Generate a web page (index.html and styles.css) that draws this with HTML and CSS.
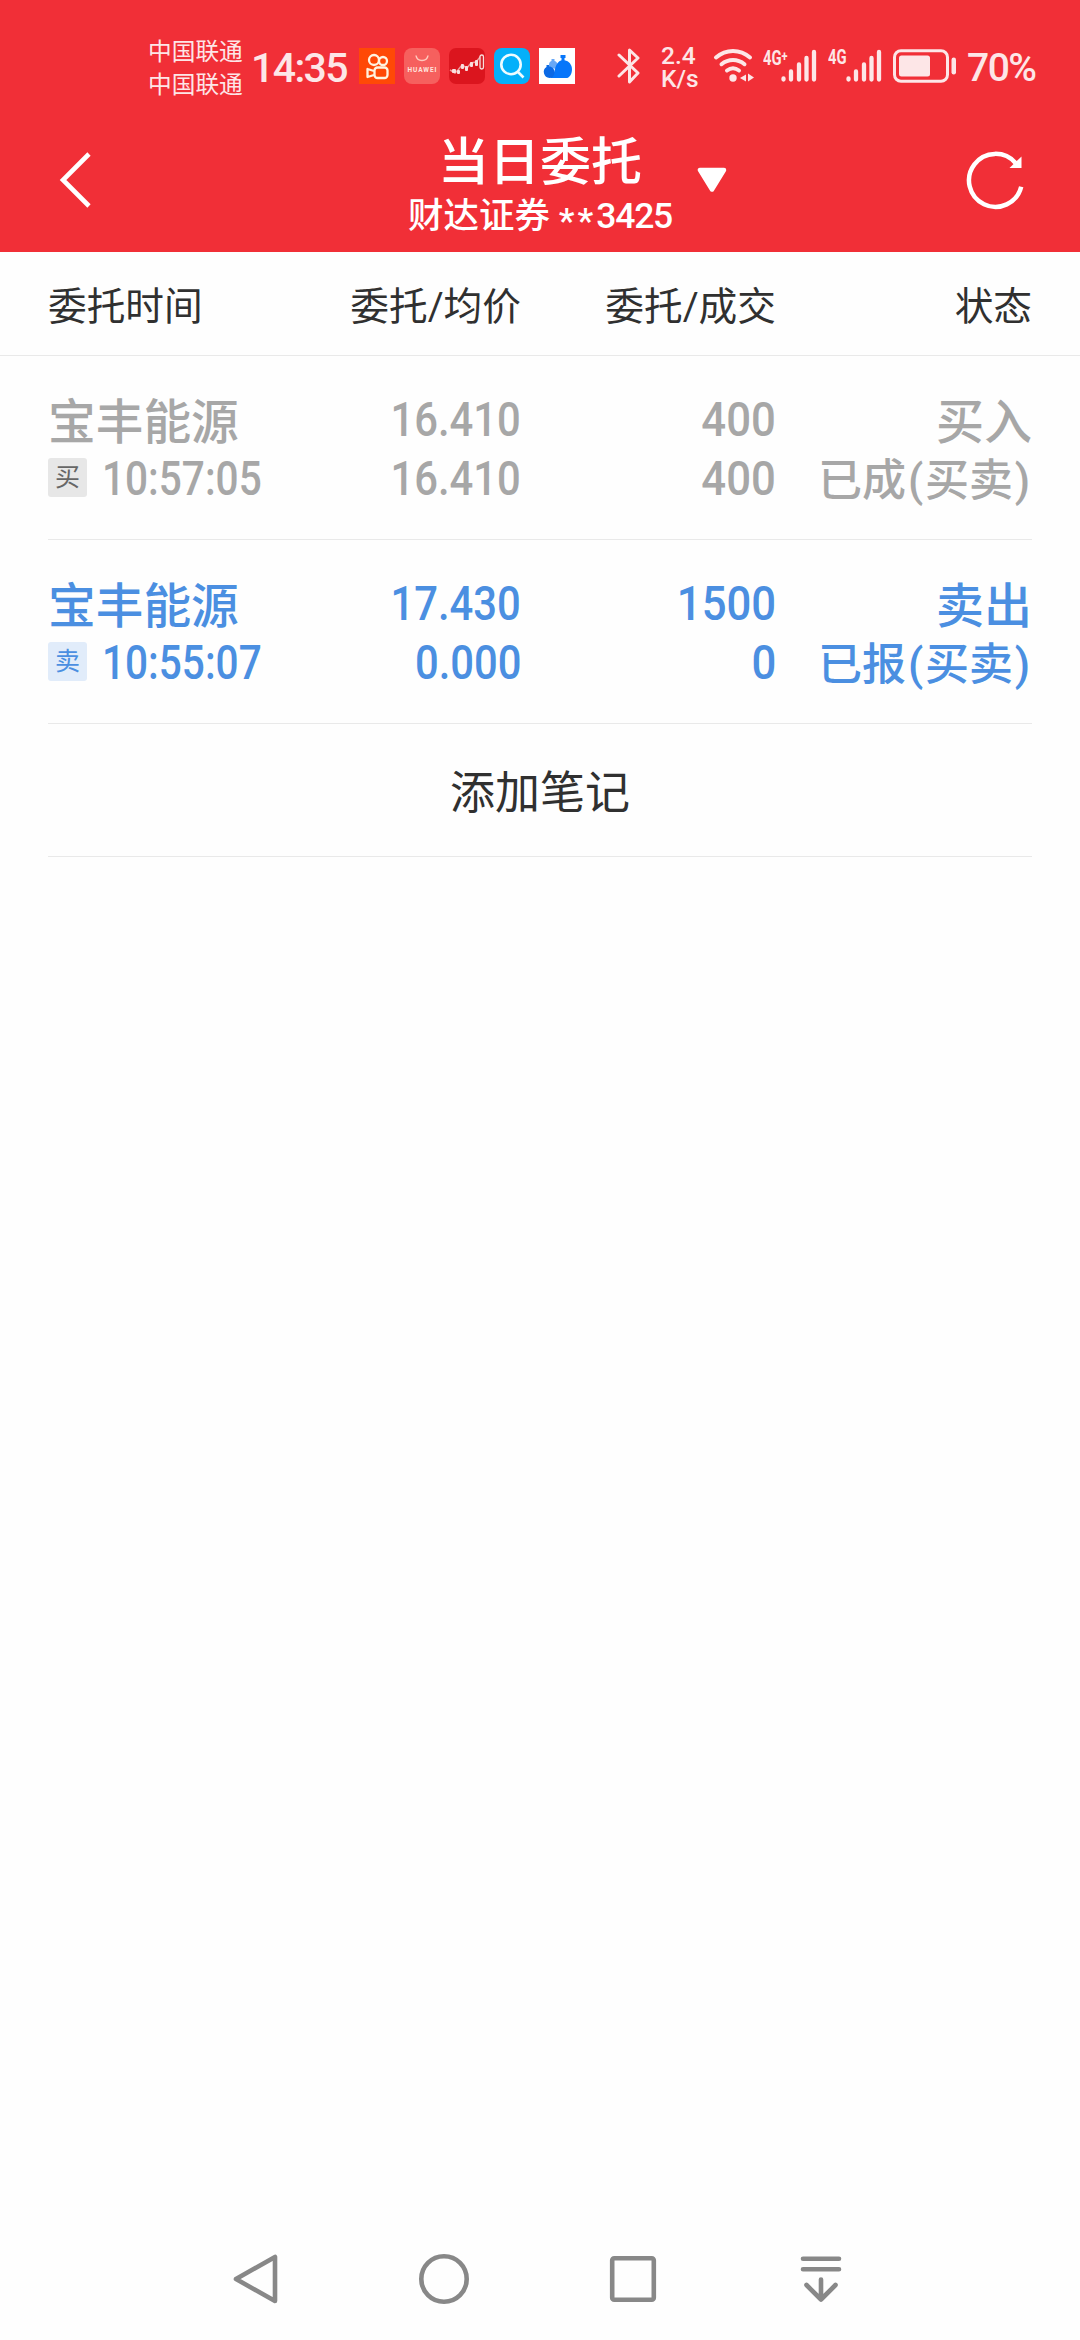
FILE: index.html
```html
<!DOCTYPE html>
<html lang="zh-CN">
<head>
<meta charset="utf-8">
<title>当日委托</title>
<link rel="stylesheet" href="styles.css">
</head>
<body>
<div class="screen">
  <header class="top">
    <div class="status">
      <div class="carriers"><span>中国联通</span><span>中国联通</span></div>
      <div class="clock">14:35</div>
      <div class="apps">
        <svg width="36" height="36" viewBox="0 0 36 36"><rect width="36" height="36" fill="#ff4906"/><g fill="none" stroke="#fff3df" stroke-width="2.3"><circle cx="15" cy="12" r="5"/><circle cx="24" cy="13" r="4"/><rect x="15.500" y="19.500" width="13" height="10.500" rx="3"/><path d="M15 23l-6.500-2v8l6.500-2" stroke-linejoin="round"/></g></svg>
        <svg width="36" height="36" viewBox="0 0 36 36"><rect width="36" height="36" rx="8" fill="#f6605e"/><path d="M12 7.500c1 6.500 11 6.500 12 0" fill="none" stroke="#ffc9bd" stroke-width="1.500"/><text x="18" y="23.500" text-anchor="middle" textLength="29" class="brand">HUAWEI</text></svg>
        <svg width="36" height="36" viewBox="0 0 36 36"><rect width="36" height="36" rx="7" fill="#db151e"/><path d="M1 22l5 3 3-3 4-5 5 3 4-5 5-1 5-6" fill="none" stroke="#ee9a9a" stroke-width="1.500"/><g fill="#f9dede"><rect x="3" y="21" width="4" height="4" rx="1"/><rect x="8" y="22" width="3" height="4" rx="1"/><rect x="12" y="16" width="3" height="5" rx="1"/><rect x="16" y="18" width="3" height="5" rx="1"/><rect x="21" y="14" width="3" height="5" rx="1"/><rect x="26" y="12" width="3" height="6" rx="1"/></g><rect x="31" y="7" width="3.500" height="14" rx="1.700" fill="#d5222a" stroke="#f9dede" stroke-width="1.300"/></svg>
        <svg width="36" height="36" viewBox="0 0 36 36"><rect width="36" height="36" rx="8" fill="#04b0fa"/><circle cx="17" cy="16.500" r="9.700" fill="none" stroke="#effcff" stroke-width="2.600"/><path d="M23.500 23.500l6 6" stroke="#effcff" stroke-width="2.600"/></svg>
        <svg width="36" height="36" viewBox="0 0 36 36"><rect width="36" height="36" fill="#fff"/><path d="M10 20v-3c0-2.500 1-3.500 2.500-4v-2h3v2c2 .5 3 2 3 4v4z" fill="#68a8f6"/><path d="M10 30c4-1 5-5 6-9 1-4.500 3.500-8 6.500-8.800V10h-1V7h5v3h-1v2.200c4.500.8 7.500 4.500 7.500 9 0 5-2.500 8.800-6 8.800z" fill="#0776fa"/><path d="M10.500 30a6 6 0 0 1-3-11v-2h2.500v1.600c3 0 5.500 2.500 5.500 5.400 0 3-2 6-5 6z" fill="#0b69e5"/></svg>
      </div>
      <svg class="bluetooth" width="24" height="40" viewBox="0 0 24 40" fill="none" stroke="#fde6e7" stroke-width="3" stroke-linecap="round" stroke-linejoin="round"><path d="M2 9l19 18-8.500 9V4L21 12 2 30"/></svg>
      <div class="speed"><span>2.4</span><span>K/s</span></div>
      <svg class="wifi" width="42" height="36" viewBox="0 0 42 36" fill="none" stroke="#fde6e7" stroke-width="4" stroke-linecap="round"><path d="M3 9.500C13 .8 27 .8 37 9.500M8.500 16.200c7-5.500 16-5.500 23 0M14 22.500c4-3 8-3 12 0"/><circle cx="20" cy="30" r="3.700" fill="#fde6e7" stroke="none"/><path d="M33 26.500v7l-6-3.500zM35 25.500v8l6-4z" fill="#fde6e7" stroke="none"/></svg>
      <div class="cell cell-plus"><span class="net"><span class="narrow">4G<small>+</small></span></span><svg width="36" height="34" viewBox="0 0 36 34" fill="none" stroke="#fde6e7" stroke-width="4.300" stroke-linecap="round"><path d="M2.500 29.500v1M10 22.500v8M18 15.500v15M25.500 9v21.500M33 3v27.500"/></svg></div>
      <div class="cell"><span class="net"><span class="narrow">4G</span></span><svg width="36" height="34" viewBox="0 0 36 34" fill="none" stroke="#fde6e7" stroke-width="4.300" stroke-linecap="round"><path d="M2.500 29.500v1M10 22.500v8M18 15.500v15M25.500 9v21.500M33 3v27.500"/></svg></div>
      <svg class="battery" width="64" height="34" viewBox="0 0 64 34"><rect x="1.500" y="1.700" width="53" height="30.600" rx="6.500" fill="none" stroke="#fde6e7" stroke-width="3"/><rect x="6" y="6.500" width="31" height="21" rx="2.500" fill="#fde6e7"/><rect x="58.500" y="8.500" width="4.500" height="17" rx="2.200" fill="#fde6e7"/></svg>
      <div class="percent">70%</div>
    </div>
    <nav class="titlebar">
      <svg class="back" width="34" height="60" viewBox="0 0 34 60" fill="none" stroke="#fff" stroke-width="4.600"><path d="M31 4L5 30l26 26"/></svg>
      <div class="heading">
        <h1>当日委托</h1>
        <p>财达证券 <span class="stars">**</span><span class="account">3425</span></p>
      </div>
      <svg class="caret" width="30" height="26" viewBox="0 0 30 26"><path d="M3 3h24L15 22.500z" fill="#fff" stroke="#fff" stroke-width="4.500" stroke-linejoin="round"/></svg>
      <svg class="refresh" width="64" height="64" viewBox="0 0 64 64"><path d="M57.200 38.800A26.500 26.500 0 1 1 51.500 15" fill="none" stroke="#fff" stroke-width="4.500"/><path d="M57.500 8.500V20H45.500z" fill="#fff"/></svg>
    </nav>
  </header>

  <main>
    <div class="grid table-head"><span>委托时间</span><span>委托/均价</span><span>委托/成交</span><span>状态</span></div>
    <section class="orders">
      <article class="grid order done">
        <div class="col"><div class="line name">宝丰能源</div><div class="line time"><i class="tag">买</i><span class="digits">10:57:05</span></div></div>
        <div class="col price"><div class="line"><span class="digits">16.410</span></div><div class="line"><span class="digits">16.410</span></div></div>
        <div class="col"><div class="line"><span class="digits">400</span></div><div class="line"><span class="digits">400</span></div></div>
        <div class="col state"><div class="line side">买入</div><div class="line">已成<b>(</b>买卖<b>)</b></div></div>
      </article>
      <article class="grid order sell">
        <div class="col"><div class="line name">宝丰能源</div><div class="line time"><i class="tag">卖</i><span class="digits">10:55:07</span></div></div>
        <div class="col price"><div class="line"><span class="digits">17.430</span></div><div class="line"><span class="digits">0.000</span></div></div>
        <div class="col"><div class="line"><span class="digits">1500</span></div><div class="line"><span class="digits">0</span></div></div>
        <div class="col state"><div class="line side">卖出</div><div class="line">已报<b>(</b>买卖<b>)</b></div></div>
      </article>
      <div class="note">添加笔记</div>
    </section>
  </main>

  <footer class="navbar">
    <svg width="54" height="54" viewBox="0 0 54 54"><path d="M46 5v44L7 27z"/></svg>
    <svg width="54" height="54" viewBox="0 0 54 54"><circle cx="27" cy="27" r="22.700"/></svg>
    <svg width="54" height="54" viewBox="0 0 54 54"><rect x="6.200" y="6.200" width="41.600" height="41.600" rx="2"/></svg>
    <svg width="54" height="54" viewBox="0 0 54 54"><path d="M9 6.700h36M9 17.200h36M27 27.500v20M12.500 33L27 47.500 41.500 33"/></svg>
  </footer>
</div>
</body>
</html>
```
FILE: styles.css
```css
* { box-sizing: border-box; }
body { margin: 0; background: #fefefe; font-family: Roboto, "Noto Sans CJK SC", sans-serif; }
svg { display: block; flex: none; }
h1, p { margin: 0; }
i, b { font-style: normal; font-weight: inherit; }

.screen { width: 1080px; height: 2340px; display: flex; flex-direction: column; }

/* Header */
.top { height: 252px; background: #f12f37; color: #fff; }
.status { height: 108px; padding: 24px 0 0 148px; display: flex; align-items: center; color: #fde6e7; white-space: nowrap; }
.carriers { flex: none; width: 103px; padding-top: 5px; display: flex; flex-direction: column; font-size: 23.7px; line-height: 33px; }
.clock { flex: none; width: 108px; font-size: 41px; line-height: 80px; letter-spacing: -1.6px; font-weight: 500; padding-top: 4px; }
.apps { display: flex; gap: 9px; }
.brand { font: 700 6.5px Roboto, sans-serif; fill: #ffe5df; }
.bluetooth { margin-left: 42px; }
.speed { flex: none; width: 54px; margin-left: 20px; padding-top: 2px; display: flex; flex-direction: column; font-size: 24.5px; line-height: 23px; font-weight: 500; }
.wifi { margin-left: -2px; }
.cell { display: flex; margin-left: 11px; }
.cell-plus { margin-left: 8px; }
.net { width: 18px; font-size: 20px; line-height: 16px; font-weight: 700; }
.narrow { display: inline-block; transform: scaleX(.74); transform-origin: left center; }
.narrow small { font-size: 15px; line-height: 1; vertical-align: 4px; }
.battery { margin-left: 11px; }
.percent { margin-left: 10px; font-size: 39px; line-height: 60px; letter-spacing: -1.5px; font-weight: 500; padding-top: 4px; }

.titlebar { height: 144px; padding: 0 52px 0 58px; display: flex; align-items: center; }
.heading { flex: none; width: 290px; margin-left: 303px; padding-top: 13px; text-align: center; }
h1 { font-size: 51px; line-height: 59px; font-weight: 500; }
.heading p { font-size: 35.5px; line-height: 49px; font-weight: 500; white-space: nowrap; }
.stars { letter-spacing: 3px; vertical-align: -5px; line-height: 1; }
.account { letter-spacing: -1.2px; }
.caret { margin-left: 12px; }
.refresh { margin-left: auto; }

/* Orders table */
.grid { display: grid; grid-template-columns: 216px 257px 255px 256px; white-space: nowrap; }
.grid > :nth-child(n+2) { text-align: right; }
.table-head { height: 104px; padding: 0 48px; border-bottom: 1px solid #e9e9e9; font-size: 38.7px; line-height: 110px; color: #303030; }
.orders { margin: 0 48px; }
.order { height: 184px; padding-top: 34px; border-bottom: 1px solid #e9e9e9; font-size: 48px; font-weight: 500; }
.line { height: 59px; line-height: 59px; }
.digits { display: inline-block; transform: scaleX(.91); transform-origin: right center; }
.price .digits { transform: scaleX(.87); }
.state .line { font-size: 44px; line-height: 65px; }
.state .side { font-size: 48px; }
.state b { display: inline-block; width: 19px; text-align: center; }
.done { color: #a7a7a7; }
.sell { color: #4b8fe1; }
.name { font-size: 47.7px; line-height: 66px; }
.time { display: flex; align-items: center; gap: 15px; }
.time .digits { transform-origin: left center; transform: scaleX(.845); }
.tag { flex: none; width: 39px; height: 39px; margin-top: -2px; border-radius: 3px; background: #e7e7e7; color: #666; font-size: 25px; line-height: 39px; text-align: center; font-weight: 400; }
.sell .tag { background: #e1ecfa; color: #4b8fe1; }
.note { height: 133px; line-height: 139px; border-bottom: 1px solid #e9e9e9; text-align: center; font-size: 45px; color: #303030; }

/* System navigation */
.navbar { margin-top: auto; height: 88px; padding: 0 232px 0 229px; display: flex; justify-content: space-between; align-items: flex-start; }
.navbar svg { fill: none; stroke: #888; stroke-width: 4.6px; stroke-linejoin: round; stroke-linecap: round; }
```
